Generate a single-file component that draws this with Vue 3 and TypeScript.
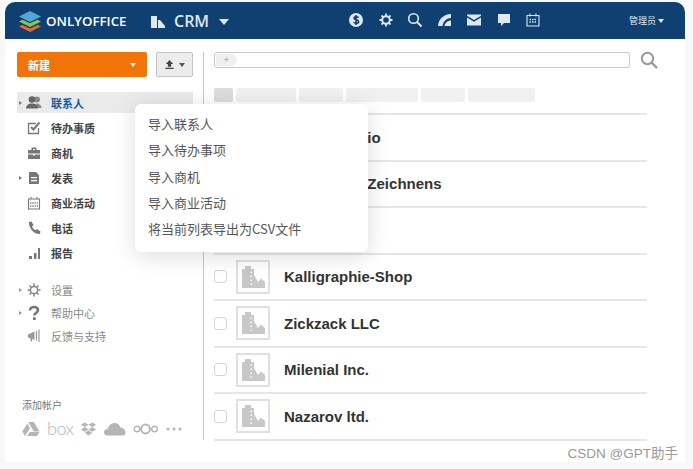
<script setup lang="ts">
const headerIcons = ["dollar", "gear", "search", "feed", "mail", "chat", "calendar"];

const mainNav = [
  { label: "联系人", icon: "people", caret: true, active: true },
  { label: "待办事质", icon: "task", caret: false, active: false },
  { label: "商机", icon: "case", caret: false, active: false },
  { label: "发表", icon: "doc", caret: true, active: false },
  { label: "商业活动", icon: "calendar", caret: false, active: false },
  { label: "电话", icon: "phone", caret: false, active: false },
  { label: "报告", icon: "bars", caret: false, active: false },
];

const subNav = [
  { label: "设置", icon: "gear", caret: true },
  { label: "帮助中心", icon: "help", caret: true },
  { label: "反馈与支持", icon: "horn", caret: false },
];

const tabs = [60, 44, 72, 44, 67];

const companies = [
  "Fine Portfolio",
  "Schule des Zeichnens",
  "",
  "Kalligraphie-Shop",
  "Zickzack LLC",
  "Milenial Inc.",
  "Nazarov ltd.",
];

const importItems = ["导入联系人", "导入待办事项", "导入商机", "导入商业活动", "将当前列表导出为CSV文件"];
</script>

<template>
  <div class="page">
    <div class="window">
      <header class="topbar">
        <svg class="logo" viewBox="0 0 24 24" width="24" height="24">
          <path fill="#e8683a" d="M12 23 1 17.6l3.4-1.7L12 19.5l7.6-3.6 3.4 1.7z" />
          <path fill="#8cc63e" d="M12 18 1 12.5l3.6-1.7L12 14.3l7.4-3.5 3.6 1.7z" />
          <path fill="#4fa8dc" d="M12 13 1 7.5 12 2l11 5.5z" />
        </svg>
        <span class="brand">ONLYOFFICE</span>
        <svg class="crm-icon" viewBox="0 0 14 12" width="14" height="12">
          <path fill="#dfe7ef" d="M0 0h6v12H0zM7 4l2 0 5 6v2H7z" />
        </svg>
        <span class="crm">CRM</span>
        <span class="crm-arrow"></span>
        <div class="top-icons">
          <svg v-for="name in headerIcons" :key="name" viewBox="0 0 16 16" width="16" height="16" class="top-icon">
            <template v-if="name === 'dollar'">
              <circle cx="8" cy="8" r="7" fill="#dfe7ef" />
              <path d="M10.6 5.6C9.6 4.5 6 4.3 6 6.2c0 2 4.6 1.2 4.6 3.5 0 2-3.9 1.8-5 .6M8 3v10" fill="none" stroke="#0f4071" stroke-width="1.6" />
            </template>
            <template v-else-if="name === 'gear'">
              <circle cx="8" cy="8" r="3.800" fill="none" stroke="#dfe7ef" stroke-width="2" />
              <path d="M8 1.500v2.500M8 12v2.500M1.500 8h2.500M12 8h2.500M3.500 3.500l1.800 1.800M10.700 10.700l1.800 1.800M12.500 3.500l-1.800 1.800M5.300 10.700l-1.800 1.800" stroke="#dfe7ef" stroke-width="1.800" />
            </template>
            <template v-else-if="name === 'search'">
              <circle cx="6.500" cy="6.500" r="4.800" fill="none" stroke="#dfe7ef" stroke-width="1.600" />
              <path d="M10 10l4.500 4.500" stroke="#dfe7ef" stroke-width="2" />
            </template>
            <template v-else-if="name === 'feed'">
              <path fill="#dfe7ef" d="M1 14C1.500 7 6.500 2.500 14 2v4C10 6 6 9.500 5.500 14zM7.500 14c.3-3 3-5.500 6.500-5.500V14z" />
            </template>
            <template v-else-if="name === 'mail'">
              <path fill="#dfe7ef" d="M1 2.500h14v1.300L8 8 1 3.800zM1 5.500 8 9.800l7-4.300V13.500H1z" />
            </template>
            <template v-else-if="name === 'chat'">
              <path fill="#dfe7ef" d="M2 2h12v9H8l-3 3v-3H2z" />
            </template>
            <template v-else>
              <path fill="none" stroke="#dfe7ef" stroke-width="1.100" d="M2 3.500h12v10.500H2zM5 1.500v3M11 1.500v3" />
              <path stroke="#dfe7ef" stroke-width="1.300" stroke-dasharray="1.500 1" d="M4.500 7.500h7.500M4.500 10h7.500" />
            </template>
          </svg>
        </div>
        <span class="user">管理员</span>
        <span class="user-arrow"></span>
      </header>

      <div class="body">
        <aside class="sidebar">
          <div class="actions">
            <button class="btn-new" type="button">
              <span>新建</span>
              <span class="btn-arrow"></span>
            </button>
            <button class="btn-upload" type="button">
              <svg viewBox="0 0 12 12" width="11" height="11">
                <path fill="#444" d="M6 1 10 5.500H7.800V8.500H4.200V5.500H2zM1.500 9.500h9v1.300h-9z" />
              </svg>
              <span class="upload-arrow"></span>
            </button>
          </div>

          <nav class="nav">
            <div v-for="item in mainNav" :key="item.label" class="nav-item" :class="{ active: item.active }">
              <span class="caret-box"><i v-if="item.caret" class="caret"></i></span>
              <svg viewBox="0 0 16 16" width="16" height="16" class="nav-icon">
                <template v-if="item.icon === 'people'">
                  <circle cx="11" cy="4.500" r="3" fill="#8a8a8a" />
                  <path fill="#8a8a8a" d="M10 8.500c3 0 5.500 1.500 5.500 4.500h-5z" />
                  <circle cx="6" cy="4.500" r="3.300" fill="#666" />
                  <path fill="#666" d="M0 13.500c0-3.500 2.500-5 6-5s6 1.500 6 5z" />
                </template>
                <template v-else-if="item.icon === 'task'">
                  <path fill="none" stroke="#777" stroke-width="1.300" d="M12.500 8v5.500h-10v-10H10" />
                  <path fill="none" stroke="#777" stroke-width="2" d="M5 7l2.500 2.500L13.500 2.500" />
                </template>
                <template v-else-if="item.icon === 'case'">
                  <path fill="#777" d="M5.500 2.500h5V5H14v3.500H2V5h3.500zM7 4v1h2V4zM2 9.500h5v1h2v-1h5V14H2z" />
                </template>
                <template v-else-if="item.icon === 'doc'">
                  <path fill="#777" fill-rule="evenodd" d="M3 2h7l3 3v9H3zM5 7v1.300h6V7zM5 10v1.300h6V10z" />
                </template>
                <template v-else-if="item.icon === 'calendar'">
                  <path fill="none" stroke="#777" stroke-width="1.100" d="M2.500 4h11v10h-11zM5 2v2M11 2v2" />
                  <path stroke="#777" stroke-width="1.300" stroke-dasharray="1.300 1" d="M4 8h8M4 11h8" />
                </template>
                <template v-else-if="item.icon === 'phone'">
                  <path fill="#777" d="M3 2l2.500-.5L7.500 5 6 6.500c.7 1.500 2 3 3.500 3.800L11 9l3.500 2.500-.7 2.500C8 14.500 2.500 8 3 2z" />
                </template>
                <template v-else>
                  <path fill="#777" d="M3 11h3v3H3zM8 8h2.500v6H8zM12 3h2v11h-2z" />
                </template>
              </svg>
              <span class="nav-label">{{ item.label }}</span>
            </div>
          </nav>

          <nav class="subnav">
            <div v-for="item in subNav" :key="item.label" class="sub-item">
              <span class="caret-box"><i v-if="item.caret" class="caret light"></i></span>
              <svg viewBox="0 0 16 16" width="16" height="16" class="nav-icon">
                <template v-if="item.icon === 'gear'">
                  <circle cx="8" cy="8" r="3.600" fill="none" stroke="#888" stroke-width="1.500" />
                  <path d="M8 1.500v3M8 11.500v3M1.500 8h3M11.500 8h3M3.500 3.500l2 2M10.500 10.500l2 2M12.500 3.500l-2 2M5.500 10.500l-2 2" stroke="#888" stroke-width="1.600" />
                </template>
                <template v-else-if="item.icon === 'help'">
                  <path d="M4 5.500C4 3 6 2 8 2s4 1 4 3.300C12 7.800 8.300 8 8.300 10.500" fill="none" stroke="#777" stroke-width="2.600" />
                  <path d="M7 12.200h2.700V15H7z" fill="#777" />
                </template>
                <template v-else>
                  <path fill="#999" d="M2 6.500 8.500 3.500V12L6 11v2.500H4.500V10.400L2 9.500z" />
                  <path d="M10.500 3v9.500M13 1.500v12.500" stroke="#999" stroke-width="1.200" />
                </template>
              </svg>
              <span class="sub-label">{{ item.label }}</span>
            </div>
          </nav>

          <div class="accounts">
            <div class="accounts-title">添加帐户</div>
            <div class="account-icons">
              <svg viewBox="0 0 18 16" width="18" height="16">
                <path fill="#b5b5b5" d="M6.200 1h5.600l5.700 9.500h-5.600zM5.200 2.500l2.800 4.800L3 15 .4 10.500zM5 15l2.800-4h9.700L15 15z" />
              </svg>
              <span class="box-text">box</span>
              <svg viewBox="0 0 18 16" width="17" height="16">
                <path fill="#b5b5b5" d="M5 1 9 3.500 5 6 1 3.500zM13 1l4 2.500L13 6 9 3.500zM5 6l4 2.500L5 11 1 8.500zM13 6l4 2.500L13 11 9 8.500zM5 12l4-2.500 4 2.500-4 3z" />
              </svg>
              <svg viewBox="0 0 22 14" width="22" height="14">
                <path fill="#b5b5b5" d="M3.500 13.500C1 13.500 0 11.800 0 10.300 0 8.500 1.500 7 3.500 7 5 3 7.500 1 10.500 1c3 0 5 2 6 4.500 3 .3 5 2.500 5 5 0 1.500-.7 3-2.500 3z" />
              </svg>
              <svg viewBox="0 0 26 12" width="26" height="12">
                <g fill="none" stroke="#b5b5b5">
                  <circle cx="4" cy="6" r="2.800" stroke-width="1.400" />
                  <circle cx="12.500" cy="6" r="4.400" stroke-width="2" />
                  <circle cx="21.500" cy="6" r="2.800" stroke-width="1.400" />
                </g>
              </svg>
              <svg viewBox="0 0 16 4" width="16" height="4">
                <circle cx="2" cy="2" r="1.500" fill="#b5b5b5" />
                <circle cx="8" cy="2" r="1.500" fill="#b5b5b5" />
                <circle cx="14" cy="2" r="1.500" fill="#b5b5b5" />
              </svg>
            </div>
          </div>
        </aside>

        <main class="content">
          <div class="search-row">
            <div class="search-box">
              <span class="search-tag">+</span>
            </div>
            <svg viewBox="0 0 18 18" width="18" height="18">
              <circle cx="7.500" cy="7.500" r="5.700" fill="none" stroke="#999" stroke-width="2" />
              <path d="M11.500 11.500l5.500 5.500" stroke="#999" stroke-width="2.400" />
            </svg>
          </div>

          <div class="tabs">
            <span class="tab first"></span>
            <span v-for="(w, i) in tabs" :key="i" class="tab" :style="{ width: w + 'px' }"></span>
          </div>

          <ul class="list">
            <li v-for="(name, i) in companies" :key="i" class="row">
              <span class="check"></span>
              <span class="thumb">
                <svg viewBox="0 0 24 24" width="24" height="24">
                  <path fill="#c8c8c8" fill-rule="evenodd" d="M1 23V4h3V1h6v3h3v6l4 7 3-3.500 4 3.500v6zM9.500 6.500V8H11V6.500zM9.500 10.500V12H11v-1.500zM9.500 14.500V16H11v-1.500zM9.500 18.500V20H11v-1.500z" />
                </svg>
              </span>
              <span class="name">{{ name }}</span>
            </li>
          </ul>
        </main>
      </div>

      <div class="import-menu">
        <div v-for="item in importItems" :key="item" class="import-item">{{ item }}</div>
      </div>
    </div>
    <div class="watermark">CSDN @GPT助手</div>
  </div>
</template>

<style>
body {
  background: #fff;
}
</style>

<style scoped>
.page {
  position: relative;
  width: 693px;
  height: 469px;
  box-sizing: border-box;
  padding: 2px 8px 0 5px;
  overflow: hidden;
  background: #f8f8f8;
  font-family: "Noto Sans CJK SC", "Liberation Sans", sans-serif;
}

.window {
  position: relative;
  height: 460px;
  background: #fff;
  border-radius: 10px 10px 0 0;
  overflow: hidden;
}

.topbar {
  display: flex;
  align-items: center;
  height: 37px;
  padding: 0 21px 0 13px;
  background: #0f4071;
  color: #fff;
}

.logo {
  flex: none;
}

.brand {
  flex: none;
  width: 105px;
  margin-left: 4px;
  font-family: "Open Sans", sans-serif;
  font-size: 13.300px;
  font-weight: 600;
}

.crm-icon {
  flex: none;
  margin-top: 2px;
}

.crm {
  margin-left: 9px;
  font-family: "Open Sans", sans-serif;
  font-size: 16px;
  font-weight: 600;
  color: #dfe7ef;
}

.crm-arrow {
  margin-left: 10px;
  margin-top: 3px;
  border-left: 5px solid transparent;
  border-right: 5px solid transparent;
  border-top: 6px solid #dfe7ef;
}

.top-icons {
  display: flex;
  gap: 13.500px;
  margin-left: 119px;
  margin-top: -2px;
}

.top-icon {
  flex: none;
}

.user {
  margin-left: auto;
  font-size: 9px;
  color: #dfe7ef;
}

.user-arrow {
  margin-left: 2px;
  border-left: 3.500px solid transparent;
  border-right: 3.500px solid transparent;
  border-top: 4px solid #dfe7ef;
}

.body {
  display: flex;
  align-items: flex-start;
}

.sidebar {
  box-sizing: border-box;
  flex: none;
  width: 199px;
  height: 388px;
  margin-top: 13px;
  padding: 0 10px 0 12px;
  border-right: 1px solid #c8c8c8;
}

.actions {
  display: flex;
  justify-content: space-between;
  margin-bottom: 15px;
}

.btn-new {
  display: flex;
  align-items: center;
  justify-content: space-between;
  box-sizing: border-box;
  width: 130px;
  height: 25px;
  padding: 0 11px;
  border: none;
  border-radius: 2px;
  background: #f07408;
  color: #fff;
  font-family: inherit;
  font-size: 11px;
  font-weight: 700;
}

.btn-arrow {
  border-left: 3.500px solid transparent;
  border-right: 3.500px solid transparent;
  border-top: 4px solid #fff;
}

.btn-upload {
  display: flex;
  align-items: center;
  justify-content: center;
  gap: 4px;
  box-sizing: border-box;
  width: 37px;
  height: 25px;
  padding: 0;
  border: 1px solid #c4c4c4;
  border-radius: 2px;
  background: #ececec;
}

.upload-arrow {
  border-left: 3px solid transparent;
  border-right: 3px solid transparent;
  border-top: 4px solid #555;
}

.nav-item {
  display: flex;
  align-items: center;
  height: 21px;
  margin-bottom: 4px;
}

.nav-item.active {
  background: #eaeaea;
}

.caret-box {
  display: flex;
  align-items: center;
  justify-content: center;
  flex: none;
  width: 7px;
}

.caret {
  border-top: 2.500px solid transparent;
  border-bottom: 2.500px solid transparent;
  border-left: 3px solid #777;
}

.caret.light {
  border-left-color: #999;
}

.nav-icon {
  flex: none;
  margin-left: 2px;
}

.nav-label {
  margin-left: 9px;
  font-size: 11px;
  font-weight: 700;
  color: #444;
}

.active .nav-label {
  color: #1a5a9e;
}

.subnav {
  margin-top: 15px;
}

.sub-item {
  display: flex;
  align-items: center;
  height: 23px;
}

.sub-label {
  margin-left: 9px;
  font-size: 11px;
  color: #888;
}

.accounts {
  margin-top: 50px;
  padding-left: 5px;
}

.accounts-title {
  font-size: 10px;
  line-height: 16px;
  color: #777;
}

.account-icons {
  display: flex;
  align-items: center;
  gap: 7px;
  margin-top: 7px;
  height: 18px;
}

.box-text {
  flex: none;
  width: 26px;
  margin-top: -3px;
  font-family: "Lato", sans-serif;
  font-size: 18px;
  font-weight: 300;
  letter-spacing: -0.5px;
  color: #b5b5b5;
}

.content {
  flex: none;
  width: 433px;
  margin-top: 13px;
  margin-left: 10px;
}

.search-row {
  display: flex;
  align-items: center;
  justify-content: space-between;
  width: 444px;
  height: 16px;
}

.search-box {
  box-sizing: border-box;
  display: flex;
  align-items: center;
  width: 416px;
  height: 16px;
  border: 1px solid #c8c8c8;
  border-radius: 3px;
}

.search-tag {
  display: flex;
  align-items: center;
  justify-content: center;
  width: 21px;
  height: 12px;
  margin-left: 1px;
  border-radius: 2px 7px 7px 2px;
  background: #efefef;
  color: #b8b8b8;
  font-family: "Liberation Sans", sans-serif;
  font-size: 9px;
  font-weight: 700;
}

.tabs {
  display: flex;
  gap: 3px;
  margin-top: 20px;
}

.tab {
  height: 14px;
  border-radius: 2px;
  background: #f0f0f0;
}

.tab.first {
  width: 19px;
  background: #dcdcdc;
}

.list {
  margin: 11px 0 0;
  padding: 0;
  list-style: none;
  border-bottom: 2px solid #e6e6e6;
}

.row {
  box-sizing: border-box;
  display: flex;
  align-items: center;
  height: 46.500px;
  border-top: 2px solid #e6e6e6;
}

.check {
  box-sizing: border-box;
  flex: none;
  width: 13px;
  height: 13px;
  border: 1px solid #d4d4d4;
  border-radius: 3px;
}

.thumb {
  box-sizing: border-box;
  display: flex;
  align-items: center;
  justify-content: center;
  flex: none;
  width: 34px;
  height: 34px;
  margin-left: 9px;
  border: 2px solid #e0e0e0;
}

.name {
  margin-left: 14px;
  font-family: "Liberation Sans", sans-serif;
  font-size: 15px;
  font-weight: 700;
  color: #333;
}

.import-menu {
  position: absolute;
  top: 102px;
  left: 130px;
  box-sizing: border-box;
  width: 233px;
  height: 148px;
  padding: 7px 13px;
  background: #fff;
  border-radius: 6px;
  box-shadow: 0 4px 22px rgba(0, 0, 0, 0.14);
}

.import-item {
  height: 26.300px;
  line-height: 26.300px;
  font-size: 13px;
  color: #555;
  white-space: nowrap;
}

.watermark {
  position: absolute;
  right: 15px;
  bottom: 7px;
  font-family: "Liberation Sans", "Noto Sans CJK SC", sans-serif;
  font-size: 13.500px;
  color: #999;
}
</style>
